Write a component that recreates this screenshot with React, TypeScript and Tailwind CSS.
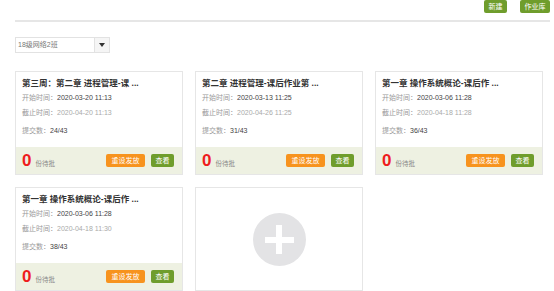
import React from 'react';

type Task = {
  title: string;
  start: string;
  end: string;
  submitted: string;
};

const tasks: Task[] = [
  { title: '第三周：第二章 进程管理-课 ...', start: '2020-03-20 11:13', end: '2020-04-20 11:13', submitted: '24/43' },
  { title: '第二章 进程管理-课后作业第 ...', start: '2020-03-13 11:25', end: '2020-04-26 11:25', submitted: '31/43' },
  { title: '第一章 操作系统概论-课后作 ...', start: '2020-03-06 11:28', end: '2020-04-18 11:28', submitted: '36/43' },
  { title: '第一章 操作系统概论-课后作 ...', start: '2020-03-06 11:28', end: '2020-04-18 11:30', submitted: '38/43' },
];

const font = { fontFamily: '"Liberation Sans", "Noto Sans CJK SC", sans-serif' };

const TaskCard = ({ task }: { task: Task }): JSX.Element => {
  return (
    <div className="h-[104px] border border-[#e6e6e6] bg-white flex flex-col">
      <div className="flex-1 pl-[6px] pt-[5px]">
        <div className="text-[8.5px] leading-[12px] font-bold text-[#333]">{task.title}</div>
        <div className="mt-[3px] text-[7px] leading-[12px] text-[#444]">
          <span className="text-[#999]">开始时间：</span>
          {task.start}
        </div>
        <div className="mt-[3px] text-[7px] leading-[12px] text-[#aaa]">
          <span className="text-[#999]">截止时间：</span>
          {task.end}
        </div>
        <div className="mt-[6px] text-[7px] leading-[12px] text-[#444]">
          <span className="text-[#999]">提交数：</span>
          {task.submitted}
        </div>
      </div>
      <div className="h-[27px] bg-[#eef1e2] flex items-center pl-[6px] pr-[8px]">
        <div className="flex items-baseline">
          <span className="text-[17px] leading-none font-bold text-[#ee1d1d]">0</span>
          <span className="ml-[4px] text-[6.5px] text-[#888]">份待批</span>
        </div>
        <div className="ml-auto flex gap-[6px]">
          <button className="w-[39px] h-[13px] rounded-[2px] bg-[#f7931e] text-white text-[7px] leading-[13px]">
            重设发放
          </button>
          <button className="w-[23px] h-[13px] rounded-[2px] bg-[#6f9d2c] text-white text-[7px] leading-[13px]">
            查看
          </button>
        </div>
      </div>
    </div>
  );
};

const AddCard = (): JSX.Element => {
  return (
    <div className="h-[104px] border border-[#e6e6e6] bg-white flex items-center justify-center">
      <div className="relative w-[53px] h-[53px] rounded-full bg-[#e3e3e5]">
        <div className="absolute left-[12px] top-[24px] w-[29px] h-[6px] bg-white" />
        <div className="absolute left-[23.5px] top-[12px] w-[6px] h-[29px] bg-white" />
      </div>
    </div>
  );
};

const App = (): JSX.Element => {
  return (
    <div className="w-[554px] h-[291px] overflow-hidden bg-white pl-[15px] pr-[4px]" style={font}>
      <div className="flex justify-end gap-[13px] h-[13px]">
        <button className="w-[23px] h-[13px] rounded-[2px] bg-[#6f9d2c] text-white text-[7px] leading-[13px]">
          新建
        </button>
        <button className="w-[30px] h-[13px] rounded-[2px] bg-[#6f9d2c] text-white text-[7px] leading-[13px]">
          作业库
        </button>
      </div>
      <div className="mt-[7px] h-[2px] bg-[#e6e6e6]" />
      <div className="mt-[15px] flex w-[95px] h-[16px] border border-[#e2e2e2]">
        <div className="flex-1 pl-[2px] text-[7px] leading-[14px] text-[#777]">18级网络2班</div>
        <div className="w-[15px] border-l border-[#e2e2e2] bg-[#f5f5f5] flex items-center justify-center">
          <svg width="6" height="4" viewBox="0 0 6 4">
            <path d="M0 0 H6 L3 4 Z" fill="#333" />
          </svg>
        </div>
      </div>
      <div className="mt-[18px] grid grid-cols-[168px_168px_168px] gap-[12px]">
        {tasks.slice(0, 3).map((t, i) => (
          <TaskCard key={i} task={t} />
        ))}
        <TaskCard task={tasks[3]} />
        <AddCard />
      </div>
    </div>
  );
};

export default App;
